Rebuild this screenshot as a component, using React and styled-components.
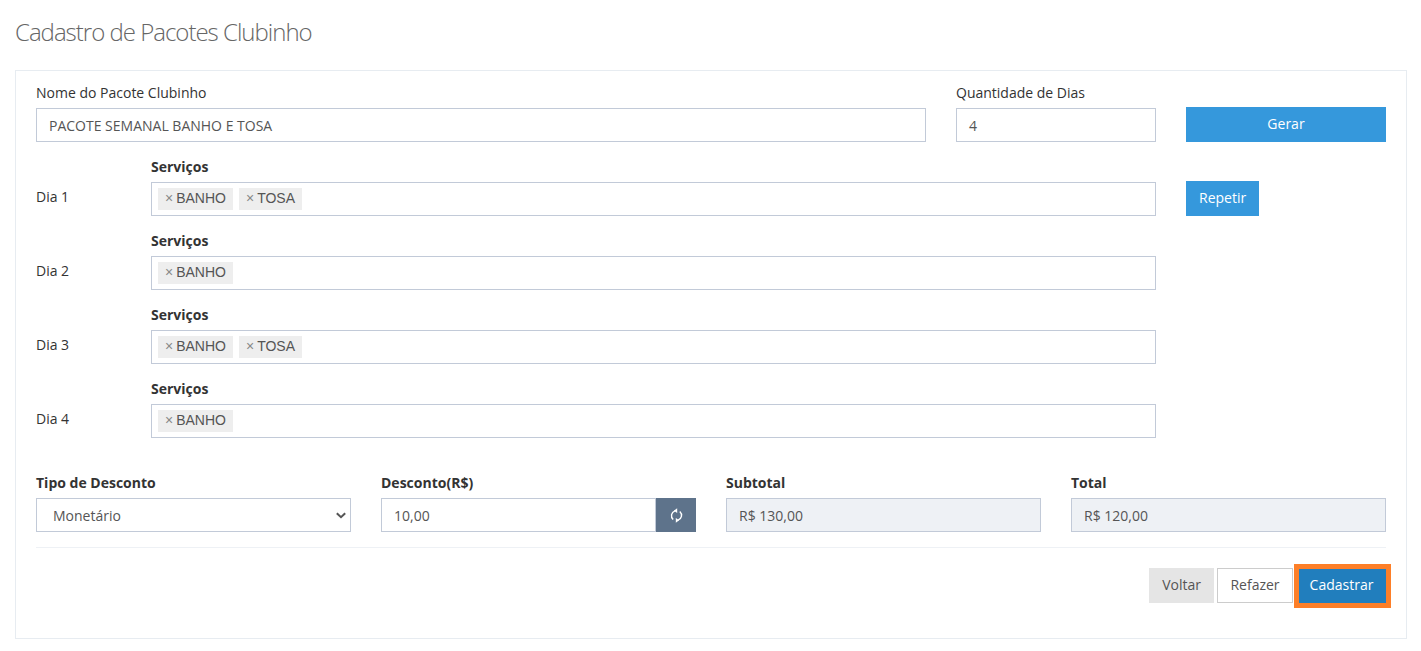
import React from "react";
import styled, { createGlobalStyle } from "styled-components";

const GlobalStyle = createGlobalStyle`
  html, body {
    margin: 0;
    padding: 0;
    background: #fff;
    font-family: "Open Sans", sans-serif;
    font-size: 14px;
    color: #333;
  }
  * {
    box-sizing: border-box;
  }
`;

const Page = styled.div`
  padding: 0 14px 12px 15px;
`;

const Title = styled.h1`
  margin: 0;
  padding-top: 15px;
  height: 70px;
  font-size: 24px;
  line-height: 33px;
  font-weight: 300;
  letter-spacing: -1px;
  color: #666;
`;

const Panel = styled.div`
  border: 1px solid #e7ecf1;
  padding: 12px 20px 34px;
  height: 569px;
`;

const TopRow = styled.div`
  display: grid;
  grid-template-columns: 890px 200px 200px;
  column-gap: 30px;
  align-items: start;
`;

const Field = styled.div`
  display: flex;
  flex-direction: column;
`;

const Label = styled.label`
  display: block;
  height: 20px;
  margin-bottom: 5px;
  font-size: 14px;
  line-height: 20px;
  font-weight: ${(p) => (p.$bold ? 700 : 400)};
  color: #333;
`;

const Input = styled.div`
  height: 34px;
  padding: 0 12px;
  display: flex;
  align-items: center;
  flex: none;
  border: 1px solid #c2cad8;
  background: ${(p) => (p.$readonly ? "#eef1f5" : "#fff")};
  font-size: 14px;
  color: #555;
`;

const Button = styled.button`
  border: 1px solid transparent;
  height: 35px;
  padding: 0 12px 2px;
  font-family: "Open Sans", sans-serif;
  font-size: 14px;
  color: #fff;
  background: #3598dc;
`;

const GenerateButton = styled(Button)`
  width: 200px;
  margin-top: 24px;
`;

const DayList = styled.div`
  margin-top: 15px;
`;

const DayRow = styled.div`
  display: grid;
  grid-template-columns: 115px 1005px auto;
  height: 74px;
`;

const DayName = styled.div`
  padding-top: 30px;
  font-size: 14px;
  line-height: 20px;
  color: #333;
`;

const TagBox = styled.div`
  height: 34px;
  display: flex;
  align-items: center;
  gap: 6px;
  padding: 0 6px;
  border: 1px solid #c2cad8;
`;

const Tag = styled.span`
  height: 22px;
  padding: 0 7px 2px;
  display: inline-flex;
  align-items: center;
  background: #eee;
  font-family: "Liberation Sans", Arial, sans-serif;
  font-size: 14px;
  color: #555;
`;

const TagRemove = styled.span`
  margin-right: 3px;
  color: #888;
  font-size: 14px;
`;

const RepeatCell = styled.div`
  padding: 24px 0 0 30px;
`;

const SummaryRow = styled.div`
  margin-top: 20px;
  display: grid;
  grid-template-columns: repeat(4, 315px);
  column-gap: 30px;
`;

const Select = styled(Input)`
  padding: 0 4px 0 16px;
  justify-content: space-between;
`;

const InputGroup = styled.div`
  display: flex;
  height: 34px;
`;

const GroupInput = styled(Input)`
  flex: 1;
`;

const AddonButton = styled.button`
  width: 40px;
  height: 34px;
  flex: none;
  border: 0;
  padding: 0;
  display: flex;
  align-items: center;
  justify-content: center;
  background: #5e738b;
`;

const Divider = styled.hr`
  margin: 15px 0 20px;
  border: 0;
  border-top: 1px solid #eef1f5;
`;

const Actions = styled.div`
  display: flex;
  justify-content: flex-end;
  align-items: flex-start;
`;

const BackButton = styled(Button)`
  background: #e5e5e5;
  color: #555;
  margin-right: 3px;
`;

const ResetButton = styled(Button)`
  width: 76px;
  background: #fff;
  border-color: #ccc;
  color: #555;
  margin-right: 6px;
`;

const SubmitButton = styled(Button)`
  width: 87px;
  height: 34px;
  margin-top: 1px;
  padding: 0 2px 3px 0;
  border: 0;
  background: #217ebd;
  outline: 5px solid #fd7f28;
`;

const days = [
  ["BANHO", "TOSA"],
  ["BANHO"],
  ["BANHO", "TOSA"],
  ["BANHO"],
];

function Chevron() {
  return (
    <svg width="10" height="7" viewBox="0 0 10 7">
      <path d="M0.8 1.2 L5 5.2 L9.2 1.2" fill="none" stroke="#555" strokeWidth="2" />
    </svg>
  );
}

function Sync() {
  return (
    <svg width="13" height="15" viewBox="0 0 13 15" fill="none" stroke="#fff" strokeWidth="1.4">
      <path d="M5 2.8 A5.2 5.2 0 0 0 3.2 11.6" />
      <path d="M8 12.2 A5.2 5.2 0 0 0 9.8 3.4" />
      <path d="M7.2 0.2 L3.8 2.7 L7.2 5 Z" fill="#fff" stroke="none" />
      <path d="M5.8 14.8 L9.2 12.3 L5.8 10 Z" fill="#fff" stroke="none" />
    </svg>
  );
}

export default function App() {
  return (
    <Page>
      <GlobalStyle />
      <Title>Cadastro de Pacotes Clubinho</Title>
      <Panel>
        <TopRow>
          <Field>
            <Label>Nome do Pacote Clubinho</Label>
            <Input>PACOTE SEMANAL BANHO E TOSA</Input>
          </Field>
          <Field>
            <Label>Quantidade de Dias</Label>
            <Input>4</Input>
          </Field>
          <GenerateButton>Gerar</GenerateButton>
        </TopRow>
        <DayList>
          {days.map((tags, i) => (
            <DayRow key={i}>
              <DayName>Dia {i + 1}</DayName>
              <Field>
                <Label $bold>Serviços</Label>
                <TagBox>
                  {tags.map((t) => (
                    <Tag key={t}>
                      <TagRemove>×</TagRemove>
                      {t}
                    </Tag>
                  ))}
                </TagBox>
              </Field>
              <RepeatCell>{i === 0 && <Button>Repetir</Button>}</RepeatCell>
            </DayRow>
          ))}
        </DayList>
        <SummaryRow>
          <Field>
            <Label $bold>Tipo de Desconto</Label>
            <Select>
              Monetário
              <Chevron />
            </Select>
          </Field>
          <Field>
            <Label $bold>Desconto(R$)</Label>
            <InputGroup>
              <GroupInput>10,00</GroupInput>
              <AddonButton>
                <Sync />
              </AddonButton>
            </InputGroup>
          </Field>
          <Field>
            <Label $bold>Subtotal</Label>
            <Input $readonly>R$ 130,00</Input>
          </Field>
          <Field>
            <Label $bold>Total</Label>
            <Input $readonly>R$ 120,00</Input>
          </Field>
        </SummaryRow>
        <Divider />
        <Actions>
          <BackButton>Voltar</BackButton>
          <ResetButton>Refazer</ResetButton>
          <SubmitButton>Cadastrar</SubmitButton>
        </Actions>
      </Panel>
    </Page>
  );
}
